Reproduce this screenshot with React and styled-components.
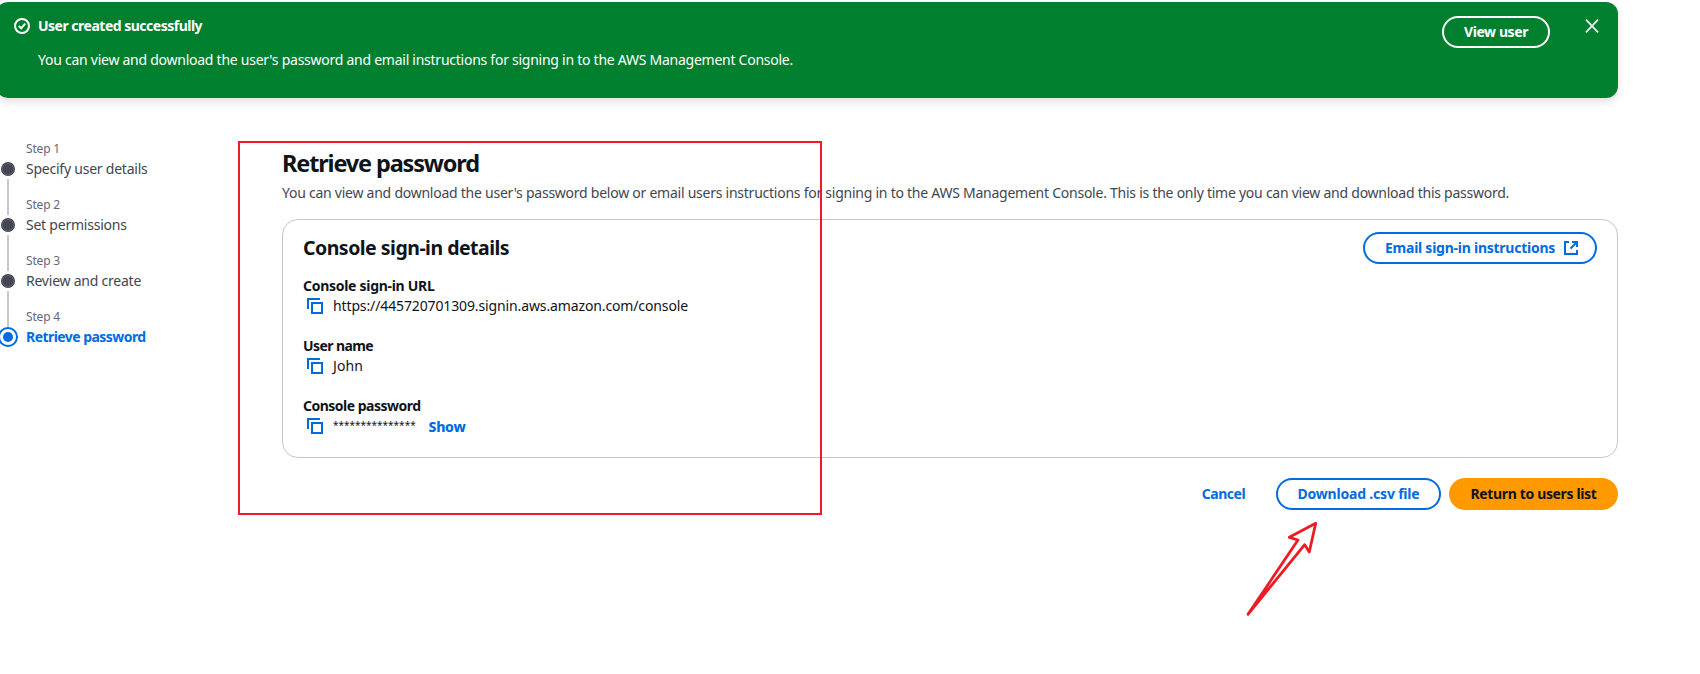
import React from "react";
import styled, { createGlobalStyle } from "styled-components";

const blue = "#006ce0";
const ink = "#0f141a";

const GlobalStyle = createGlobalStyle`
  *, *::before, *::after { box-sizing: border-box; }
  body {
    margin: 0;
    background: #fff;
    color: ${ink};
    font: 400 14px/20px "Noto Sans", "Open Sans", sans-serif;
    letter-spacing: -0.256px;
    overflow: hidden;
  }
  h1, h2, p, ol, dl, dd { margin: 0; padding: 0; }
`;

const Page = styled.div`
  position: relative;
  height: 674px;
  padding-top: 2px;
  overflow: hidden;
`;

const Banner = styled.section`
  display: flex;
  align-items: flex-start;
  width: 1622px;
  height: 96px;
  margin-left: -4px;
  padding: 14px 18px 0;
  border-radius: 12px;
  background: #00802f;
  color: #fff;
  box-shadow: 0 4px 8px rgba(0, 7, 22, 0.12);
`;

const BannerIcon = styled.svg`
  flex: none;
  width: 16px;
  height: 16px;
  margin: 2px 8px 0 0;
`;

const BannerText = styled.div`
  display: flex;
  flex-direction: column;
  gap: 14px;
  flex: 1;
`;

const Strong = styled.strong`
  font-weight: 700;
  letter-spacing: -0.5px;
`;

const Button = styled.button`
  display: inline-flex;
  align-items: center;
  justify-content: ${(p) => (p.$start ? "flex-start" : "center")};
  gap: 8px;
  flex: none;
  width: ${(p) => p.$width}px;
  height: 32px;
  padding: ${(p) => (p.$start ? "0 0 0 20px" : "0")};
  border: 2px solid ${(p) => p.$border || "transparent"};
  border-radius: 20px;
  background: ${(p) => p.$fill || "transparent"};
  background-clip: border-box;
  background-origin: border-box;
  color: ${(p) => p.$color || blue};
  font: inherit;
  font-weight: 700;
  letter-spacing: ${(p) => p.$track}px;
  white-space: nowrap;
`;

const CloseButton = styled.button`
  display: flex;
  width: 16px;
  height: 16px;
  margin: 2px 0 0 34px;
  padding: 0;
  border: 0;
  background: none;
`;

const Body = styled.main`
  display: flex;
  width: 1618px;
  padding-top: 41px;
`;

const Steps = styled.ol`
  width: 282px;
  list-style: none;
`;

const Step = styled.li`
  display: flex;
  height: 56px;
`;

const Rail = styled.div`
  display: flex;
  flex-direction: column;
  align-items: center;
  width: 16px;
  margin-right: 10px;
`;

const Line = styled.span`
  width: 2px;
  height: ${(p) => p.$height}px;
  background: ${(p) => (p.$hidden ? "transparent" : "#c6c6cd")};
`;

const Marker = styled.svg`
  flex: none;
  width: 20px;
  height: 20px;
`;

const StepText = styled.div`
  display: flex;
  flex-direction: column;
  color: ${(p) => (p.$active ? blue : "#424650")};
  font-weight: ${(p) => (p.$active ? 700 : 400)};
  letter-spacing: ${(p) => (p.$active ? -0.55 : -0.23)}px;
`;

const StepCount = styled.span`
  font-size: 12px;
  font-weight: 400;
  letter-spacing: -0.18px;
  color: #656871;
`;

const Content = styled.div`
  flex: 1;
`;

const Title = styled.h1`
  padding-top: 9px;
  font-size: 23.5px;
  line-height: 30px;
  font-weight: 700;
  letter-spacing: -1.15px;
`;

const Description = styled.p`
  padding-top: 5px;
  color: #424650;
  white-space: nowrap;
  letter-spacing: -0.248px;
`;

const Card = styled.section`
  height: 239px;
  margin-top: 16px;
  padding: 12px 20px;
  border: 1px solid #c6c6cd;
  border-radius: 16px;
`;

const CardHeader = styled.header`
  display: flex;
  align-items: center;
  justify-content: space-between;
  height: 32px;
`;

const CardTitle = styled.h2`
  font-size: 19.5px;
  line-height: 24px;
  font-weight: 700;
  letter-spacing: -0.51px;
`;

const Fields = styled.dl`
  display: flex;
  flex-direction: column;
  gap: 20px;
  padding-top: 12px;
`;

const Label = styled.dt`
  font-weight: 700;
  letter-spacing: ${(p) => p.$track}px;
`;

const Value = styled.dd`
  display: flex;
  height: 20px;
  letter-spacing: ${(p) => p.$track || 0}px;
`;

const CopyIcon = styled.svg`
  width: 16px;
  height: 16px;
  margin: 2px 10px 0 4px;
`;

const Mask = styled.span`
  width: 95.5px;
  font-size: 10px;
  line-height: 19px;
  letter-spacing: 0;
`;

const ShowLink = styled.a`
  padding-top: 1px;
  color: ${blue};
  font-weight: 800;
  letter-spacing: -0.25px;
`;

const Footer = styled.footer`
  display: flex;
  justify-content: flex-end;
  gap: 8px;
  padding-top: 20px;
`;

const HighlightBox = styled.div`
  position: absolute;
  left: 238px;
  top: 141px;
  width: 584px;
  height: 374px;
  border: 2px solid #ed1c24;
`;

const Arrow = styled.svg`
  position: absolute;
  left: 1240px;
  top: 516px;
  width: 84px;
  height: 106px;
`;

const steps = ["Specify user details", "Set permissions", "Review and create", "Retrieve password"];

function Copy() {
  return (
    <CopyIcon viewBox="0 0 16 16" fill="none" stroke={blue} strokeWidth="2">
      <path d="M1 11V1h12" />
      <path d="M5 5h10v10H5z" />
    </CopyIcon>
  );
}

export default function App() {
  return (
    <Page>
      <GlobalStyle />
      <Banner>
        <BannerIcon viewBox="0 0 16 16" fill="none" stroke="#fff" strokeWidth="2">
          <circle cx="8" cy="8" r="7" />
          <path d="M4.8 8l2.4 2.3 4-4.6" />
        </BannerIcon>
        <BannerText>
          <Strong>User created successfully</Strong>
          <p>You can view and download the user's password and email instructions for signing in to the AWS Management Console.</p>
        </BannerText>
        <Button $width={108} $border="#fff" $color="#fff" $track={-0.42}>View user</Button>
        <CloseButton aria-label="Close">
          <svg width="16" height="16" viewBox="0 0 16 16" stroke="#ebebf0" strokeWidth="1.8">
            <path d="M2 1.7l12 12.6M14 1.7L2 14.3" />
          </svg>
        </CloseButton>
      </Banner>
      <Body>
        <Steps>
          {steps.map((name, i) => {
            const active = i === steps.length - 1;
            return (
              <Step key={name}>
                <Rail>
                  <Line $height={20} $hidden={i === 0} />
                  <Marker viewBox="0 0 20 20">
                    {active ? (
                      <>
                        <circle cx="10" cy="10" r="9" fill="#fff" stroke={blue} strokeWidth="2" />
                        <circle cx="10" cy="10" r="5" fill={blue} />
                      </>
                    ) : (
                      <>
                        <circle cx="10" cy="10" r="7" fill="#424650" />
                        <circle cx="10" cy="10" r="5.5" fill="none" stroke="#6a6e78" strokeWidth="0.6" />
                      </>
                    )}
                  </Marker>
                  <Line $height={16} $hidden={active} />
                </Rail>
                <StepText $active={active}>
                  <StepCount>Step {i + 1}</StepCount>
                  {name}
                </StepText>
              </Step>
            );
          })}
        </Steps>
        <Content>
          <Title>Retrieve password</Title>
          <Description>
            You can view and download the user's password below or email users instructions for signing in to the AWS Management Console. This is the only time you can view and download this password.
          </Description>
          <Card>
            <CardHeader>
              <CardTitle>Console sign-in details</CardTitle>
              <Button $width={234} $border={blue} $track={-0.25} $start>
                Email sign-in instructions
                <svg width="16" height="16" viewBox="0 0 16 16" fill="none" stroke={blue} strokeWidth="2">
                  <path d="M6 2H2v12h12v-4" />
                  <path d="M9 2h5v5M14 2L7.5 8.5" />
                </svg>
              </Button>
            </CardHeader>
            <Fields>
              <div>
                <Label $track={-0.287}>Console sign-in URL</Label>
                <Value $track={-0.125}><Copy />https://445720701309.signin.aws.amazon.com/console</Value>
              </div>
              <div>
                <Label $track={-0.596}>User name</Label>
                <Value $track={0.1}><Copy />John</Value>
              </div>
              <div>
                <Label $track={-0.508}>Console password</Label>
                <Value><Copy /><Mask>***************</Mask><ShowLink>Show</ShowLink></Value>
              </div>
            </Fields>
          </Card>
          <Footer>
            <Button $width={89} $track={-0.47}>Cancel</Button>
            <Button $width={165} $border={blue} $track={-0.2}>Download .csv file</Button>
            <Button $width={169} $border="#ff9900" $fill="#ff9900" $color={ink} $track={-0.35}>Return to users list</Button>
          </Footer>
        </Content>
      </Body>
      <HighlightBox />
      <Arrow viewBox="1240 516 84 106" fill="none" stroke="#ed1c24" strokeWidth="2.8" strokeLinejoin="round">
        <path d="M1248 614.3L1298 540L1289.3 537.3L1315.7 523.3L1309.3 552L1304.7 544.7Z" />
      </Arrow>
    </Page>
  );
}
